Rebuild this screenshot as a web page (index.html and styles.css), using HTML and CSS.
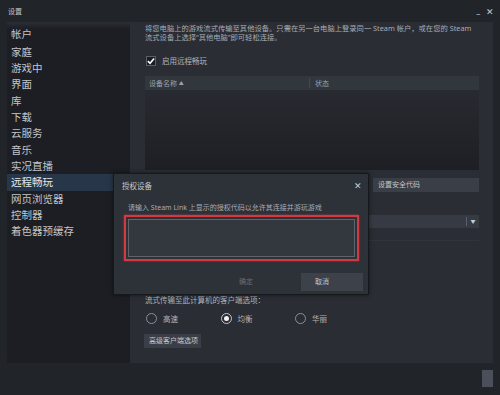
FILE: index.html
```html
<!DOCTYPE html>
<html lang="zh-CN">
<head>
    <meta charset="UTF-8">
    <meta name="viewport" content="width=device-width, initial-scale=1.0">
    <title>设置</title>
    <link rel="stylesheet" href="styles.css">
</head>
<body>
    <div class="titleBar">
        <span class="titleText">设置</span>
        <span class="winControls"><span class="minBtn">_</span><span class="closeBtn">✕</span></span>
    </div>

    <div class="mainArea">
        <div class="sidebar">
            <div class="navItem">帐户</div>
            <div class="navItem">家庭</div>
            <div class="navItem">游戏中</div>
            <div class="navItem">界面</div>
            <div class="navItem">库</div>
            <div class="navItem">下载</div>
            <div class="navItem">云服务</div>
            <div class="navItem">音乐</div>
            <div class="navItem">实况直播</div>
            <div class="navItem active">远程畅玩</div>
            <div class="navItem">网页浏览器</div>
            <div class="navItem">控制器</div>
            <div class="navItem">着色器预缓存</div>
        </div>

        <div class="panel">
            <p class="intro">将您电脑上的游戏流式传输至其他设备。只需在另一台电脑上登录同一 Steam 帐户，或在您的 Steam<br>流式设备上选择“其他电脑”即可轻松连接。</p>

            <div class="checkRow">
                <span class="checkBox">
                    <svg width="9" height="8" viewBox="0 0 9 8"><path d="M1 4.2 L3.4 6.5 L8 1.2" fill="none" stroke="#fff" stroke-width="1.8"/></svg>
                </span>
                <span>启用远程畅玩</span>
            </div>

            <div class="deviceTable">
                <div class="tableHead">
                    <div class="colName">设备名称 <span class="sortArrow">▲</span></div>
                    <div class="colStatus">状态</div>
                </div>
                <div class="tableBody"></div>
            </div>

            <div class="buttonRow">
                <div class="smallButton securityButton">设置安全代码</div>
            </div>

            <div class="dropdown">
                <span class="dropArrow">▼</span>
            </div>
            <div class="faintLine"></div>

            <div class="optionsLabel">流式传输至此计算机的客户端选项：</div>
            <div class="radioRow">
                <div class="radioItem"><span class="radio"></span>高速</div>
                <div class="radioItem"><span class="radio checked"></span>均衡</div>
                <div class="radioItem"><span class="radio"></span>华丽</div>
            </div>

            <div class="smallButton advancedButton">高级客户端选项</div>
        </div>
    </div>

    <div class="footer">
        <div class="footerButton"></div>
    </div>

    <div class="dialog">
        <div class="dialogTitle">
            <span>授权设备</span>
            <span class="dialogClose">✕</span>
        </div>
        <div class="dialogLabel">请输入 Steam Link 上显示的授权代码以允许其连接并游玩游戏</div>
        <div class="redFrame">
            <div class="codeInput"></div>
        </div>
        <div class="dialogButtons">
            <div class="dialogBtn disabled">确定</div>
            <div class="dialogBtn cancel">取消</div>
        </div>
    </div>
</body>
</html>
```

FILE: styles.css
```css
body {
    margin: 0;
    width: 500px;
    height: 395px;
    overflow: hidden;
    position: relative;
    background-color: #212429;
    font-family: "Noto Sans", "Noto Sans CJK SC", sans-serif;
    color: #b4b8bd;
}

.titleBar {
    height: 22px;
    display: flex;
    align-items: center;
    justify-content: space-between;
    padding: 0 6px 0 8px;
    font-size: 7px;
    color: #c3c6ca;
}

.winControls {
    display: flex;
    align-items: center;
    gap: 6px;
    font-size: 9px;
    color: #c9ccd0;
}

.minBtn {
    font-size: 8px;
    margin-top: -4px;
}

.mainArea {
    display: flex;
    height: 341px;
    padding: 0 7px;
}

.sidebar {
    width: 123px;
    background: linear-gradient(#2a2e36 0px, #1c1e23 7px);
    padding-top: 4px;
    box-sizing: border-box;
}

.navItem {
    height: 16.33px;
    line-height: 16.33px;
    padding-left: 4px;
    font-size: 10.5px;
    color: #c2c5ca;
}

.navItem:first-child {
    margin-bottom: 1.5px;
}

.navItem.active {
    background-color: #273648;
    color: #e4e7ea;
}

.panel {
    flex: 1;
    background-color: #2a2d34;
    padding: 2px 14px 0 15px;
    display: flex;
    flex-direction: column;
}

.intro {
    margin: 0;
    font-size: 7.3px;
    line-height: 8.5px;
    color: #a8acb2;
    white-space: nowrap;
}

.checkRow {
    display: flex;
    align-items: center;
    gap: 6px;
    margin-top: 14px;
    height: 11px;
    font-size: 7.5px;
    color: #b0b4b9;
}

.checkBox {
    width: 10px;
    height: 10px;
    margin-left: 1px;
    background-color: #1b1d22;
    border: 1px solid #5b6068;
    box-sizing: border-box;
    display: flex;
    align-items: center;
    justify-content: center;
}

.deviceTable {
    margin-top: 10px;
}

.tableHead {
    height: 14px;
    background-color: #32363d;
    display: flex;
    align-items: center;
    font-size: 7px;
    color: #9ea2a8;
}

.colName {
    width: 165px;
    padding-left: 4px;
    box-sizing: border-box;
    border-right: 1px solid #454a52;
    height: 10px;
    line-height: 10px;
}

.sortArrow {
    font-size: 5px;
    vertical-align: 1px;
}

.colStatus {
    padding-left: 5px;
}

.tableBody {
    height: 80px;
    background: linear-gradient(#272a30, #1d1f24);
}

.buttonRow {
    display: flex;
    justify-content: flex-end;
    margin-top: 8px;
}

.smallButton {
    height: 14px;
    line-height: 14px;
    background-color: #3a3e46;
    font-size: 7px;
    color: #c3c6ca;
    padding-left: 5px;
    box-sizing: border-box;
}

.securityButton {
    width: 106px;
}

.dropdown {
    margin-top: 23px;
    height: 13px;
    background-color: #363a42;
    display: flex;
    justify-content: flex-end;
    align-items: center;
}

.dropArrow {
    font-size: 5px;
    color: #c9ccd0;
    width: 12px;
    text-align: center;
    border-left: 1px solid #5b6068;
    line-height: 9px;
}

.faintLine {
    margin-top: 12px;
    height: 1px;
    background-color: #30343b;
}

.optionsLabel {
    margin-top: 55px;
    font-size: 7.5px;
    line-height: 9px;
    color: #b0b4b9;
}

.radioRow {
    display: flex;
    margin-top: 8px;
    height: 11px;
    align-items: center;
}

.radioItem {
    width: 74.5px;
    display: flex;
    align-items: center;
    gap: 6px;
    font-size: 7.5px;
    color: #b0b4b9;
}

.radio {
    width: 11px;
    height: 11px;
    margin-left: 1px;
    border-radius: 50%;
    border: 1.3px solid #8d9197;
    box-sizing: border-box;
    display: flex;
    align-items: center;
    justify-content: center;
}

.radio.checked {
    border-color: #c4c7cb;
}

.radio.checked::after {
    content: "";
    width: 5px;
    height: 5px;
    border-radius: 50%;
    background-color: #f2f3f4;
}

.advancedButton {
    margin-top: 10px;
    width: 57px;
    align-self: flex-start;
    margin-left: -1px;
}

.footer {
    height: 32px;
    display: flex;
    justify-content: flex-end;
    padding: 7px 7px 0 0;
    box-sizing: border-box;
}

.footerButton {
    width: 11px;
    height: 17px;
    background-color: #4a4f59;
}

.dialog {
    position: absolute;
    left: 113px;
    top: 173px;
    width: 256px;
    height: 122px;
    box-sizing: border-box;
    background-color: #2d3138;
    border: 1px solid #16181c;
    box-shadow: 0 0 4px rgba(0, 0, 0, 0.5);
    display: flex;
    flex-direction: column;
}

.dialogTitle {
    height: 22px;
    display: flex;
    align-items: center;
    justify-content: space-between;
    padding: 0 6px 0 8px;
    font-size: 7.5px;
    color: #c8cbcf;
}

.dialogClose {
    font-size: 9px;
    color: #c9ccd0;
}

.dialogLabel {
    margin-top: 7px;
    padding-left: 14px;
    font-size: 7px;
    line-height: 9px;
    color: #a9adb3;
    white-space: nowrap;
}

.redFrame {
    margin: 3px 9px 0 10px;
    height: 46px;
    border: 2px solid #d33a40;
    box-shadow: 0 0 2px rgba(230, 70, 75, 0.6);
    padding: 2px;
    box-sizing: border-box;
}

.codeInput {
    height: 100%;
    background-color: #33373e;
    border: 1px solid #5f636a;
    box-sizing: border-box;
}

.dialogButtons {
    margin-top: 12px;
    display: flex;
    justify-content: flex-end;
    padding-right: 5px;
}

.dialogBtn {
    width: 62px;
    height: 18px;
    line-height: 18px;
    font-size: 7px;
    box-sizing: border-box;
}

.dialogBtn.disabled {
    color: #6b6f75;
    padding-left: 10px;
    margin-right: 10px;
}

.dialogBtn.cancel {
    background-color: #3d414a;
    color: #c3c6ca;
    padding-left: 14px;
}
```
